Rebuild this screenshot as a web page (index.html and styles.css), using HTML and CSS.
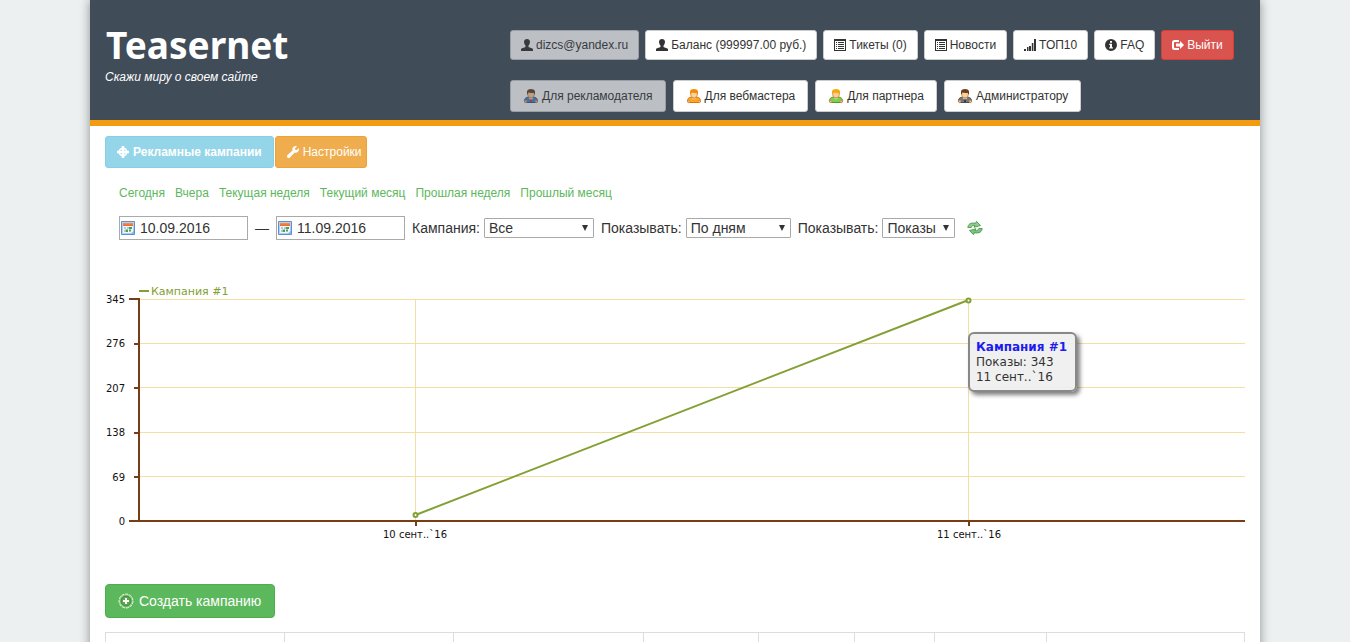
FILE: index.html
```html
<!DOCTYPE html>
<html lang="ru">
<head>
  <meta charset="UTF-8" />
  <title>Teasernet</title>
  <meta name="viewport" content="width=device-width, initial-scale=1" />
  <link rel="stylesheet" href="styles.css">
</head>
<body>

  <!-- Иконки -->
  <svg class="sprite" aria-hidden="true">
    <symbol id="i-user" viewBox="0 0 12 12">
      <path d="M6 0C4.200 0 3 1.200 3 2.800c0 1.500.7 3 1.500 3.900v1.300C3.300 8.800 0 8.900 0 10.500V12h12v-1.500c0-1.600-3.300-1.700-4.500-2.500V6.700C8.300 5.800 9 4.300 9 2.800 9 1.200 7.800 0 6 0z"/>
    </symbol>
    <symbol id="i-list" viewBox="0 0 12 12">
      <path fill-rule="evenodd" d="M0 0h12v12H0zM1 2v9h10V2z"/>
      <path d="M2 3h1v1H2zM4 3h6v1H4zM2 5h1v1H2zM4 5h6v1H4zM2 7h1v1H2zM4 7h6v1H4zM2 9h1v1H2zM4 9h6v1H4z"/>
    </symbol>
    <symbol id="i-signal" viewBox="0 0 12 12">
      <path d="M0 10h2v2H0zM3 8h1.500v4H3zM5 7h2v5H5zM7.800 4h1.600v8H7.800zM10 0h2v12h-2z"/>
    </symbol>
    <symbol id="i-info" viewBox="0 0 12 12">
      <path fill-rule="evenodd" d="M6 0a6 6 0 1 0 0 12A6 6 0 0 0 6 0zM5 2h2v1.800H5zM4.200 4.800H7V8.300h.9v1.200H4.200V8.300H5V6h-.8z"/>
    </symbol>
    <symbol id="i-logout" viewBox="0 0 12 12">
      <path d="M7 1H2.500A2.500 2.500 0 0 0 0 3.500v5A2.500 2.500 0 0 0 2.500 11H7V9H3a1 1 0 0 1-1-1V4a1 1 0 0 1 1-1h4z"/>
      <path d="M8 2l4 4-4 4V7.500H4v-3h4z"/>
    </symbol>
    <symbol id="i-target" viewBox="0 0 12 12">
      <path fill-rule="evenodd" d="M4.700 0h2.600v1.500A4.800 4.800 0 0 1 10.500 4.700H12v2.600h-1.500A4.800 4.800 0 0 1 7.300 10.500V12H4.700v-1.500A4.800 4.800 0 0 1 1.500 7.300H0V4.700h1.500A4.800 4.800 0 0 1 4.700 1.500zM4.700 3.300A3 3 0 0 0 3.300 4.700H4.700zM7.300 3.300V4.700h1.400A3 3 0 0 0 7.300 3.300zM3.300 7.300A3 3 0 0 0 4.700 8.700V7.300zM7.300 7.300v1.400A3 3 0 0 0 8.700 7.300z"/>
    </symbol>
    <symbol id="i-wrench" viewBox="0 0 12 12">
      <path d="M10 .3L8 2.200l.3 1.500 1.500.3L11.800 2c.5 1.700 0 3.400-1.200 4.100-.9.600-2 .7-2.900.3L3 11.500a1.700 1.700 0 0 1-2.500-2.400L5.500 4.500C5.100 3.300 5.400 1.900 6.300 1 7.300 0 8.800-.2 10 .3z"/>
    </symbol>
    <symbol id="i-person" viewBox="0 0 16 16">
      <path d="M2.500 14.500C1.300 14 1.200 12.800 1.700 11.500 2.300 10 3.300 9.500 4.800 9.300h6.400c1.500.2 2.500.7 3.100 2.200.5 1.300.4 2.500-.8 3z" fill="var(--coat)" stroke="var(--edge)"/>
      <path d="M5.500 9.500h5L8 12.500z" fill="var(--shirt)"/>
      <path d="M7.500 10.500h1l.5 3.500H7z" fill="var(--tie)"/>
      <circle cx="2.700" cy="13.500" r="1.200" fill="#f4c08a" stroke="#c87a3a" stroke-width=".6"/>
      <circle cx="13.300" cy="13.500" r="1.200" fill="#f4c08a" stroke="#c87a3a" stroke-width=".6"/>
      <rect x="4.800" y="2.500" width="6.400" height="7.200" rx="2.600" fill="#fad09c" stroke="#c98545" stroke-width=".8"/>
      <path d="M4 6.300V3.300C4.500 1.800 6 1.100 8 1.100s3.500.7 4 2.200v3h-1V4.800c-2 .3-4 .3-6-.2v1.700z" fill="var(--hair)"/>
    </symbol>
    <symbol id="i-calendar" viewBox="0 0 14 14">
      <path d="M.5.500h13v13H.5z" fill="#eef5fd" stroke="#5b8fd0"/>
      <path d="M1.500 1.500h11v11h-11z" fill="none" stroke="#b4d0f0"/>
      <path d="M2 2h10v3H2z" fill="#f58a4b"/>
      <path d="M2 3.500h10V5H2z" fill="#ee6f2d"/>
      <path d="M3 6h2v2H3zM6 6h2v2H6zM3 9h1v2H3z" fill="#b6c6dc"/>
      <path d="M8 6h3v2H8zM4.500 8.500h2.500v2.500H4.500zM8 8.500h2v2H8z" fill="#4f9f54"/>
      <path d="M13 9.500L9.500 13H13z" fill="#8fb7e6"/>
    </symbol>
    <symbol id="i-refresh" viewBox="0 0 16 16">
      <path d="M.8 7.500C1 4.300 3.800 2.200 8.500 3.300L9.500 1.300 13.500 5.500 7 7.300 7.900 5.500C6 5.100 4.800 5.800 4.200 7.500z" fill="#8cd08a" stroke="#3f8f45" stroke-width=".8"/>
      <path d="M15.200 8.500c-.2 3.200-3 5.300-7.700 4.200l-1 2L2.500 10.500 9 8.700l-.9 1.800c1.900.4 3.100-.3 3.700-2z" fill="#7cc67c" stroke="#3f8f45" stroke-width=".8"/>
    </symbol>
    <symbol id="i-add" viewBox="0 0 16 16">
      <circle cx="8" cy="8" r="7" fill="#8fcf85" stroke="#e5f5e0" stroke-dasharray="3 1"/>
      <circle cx="8" cy="8" r="5" fill="#57a84f" stroke="#3f8a3a"/>
      <path d="M7 5h2v2h2v2H9v2H7V9H5V7h2z" fill="#fff"/>
    </symbol>
  </svg>

  <div class="page">
    <header class="header">
      <div class="brand">
        <h1>Teasernet</h1>
        <p>Скажи миру о своем сайте</p>
      </div>
      <div class="menus">
        <nav class="menu menu-top" aria-label="Аккаунт">
          <a class="btn disabled" href="#"><svg class="glyph"><use href="#i-user"/></svg>dizcs@yandex.ru</a>
          <a class="btn" href="#"><svg class="glyph"><use href="#i-user"/></svg>Баланс (999997.00 руб.)</a>
          <a class="btn" href="#"><svg class="glyph"><use href="#i-list"/></svg>Тикеты (0)</a>
          <a class="btn" href="#"><svg class="glyph"><use href="#i-list"/></svg>Новости</a>
          <a class="btn" href="#"><svg class="glyph"><use href="#i-signal"/></svg>ТОП10</a>
          <a class="btn" href="#"><svg class="glyph"><use href="#i-info"/></svg>FAQ</a>
          <a class="btn btn-danger" href="#"><svg class="glyph"><use href="#i-logout"/></svg>Выйти</a>
        </nav>
        <nav class="menu menu-roles" aria-label="Разделы">
          <a class="btn btn-role disabled" href="#"><svg class="person advertiser"><use href="#i-person"/></svg>Для рекламодателя</a>
          <a class="btn btn-role" href="#"><svg class="person webmaster"><use href="#i-person"/></svg>Для вебмастера</a>
          <a class="btn btn-role" href="#"><svg class="person partner"><use href="#i-person"/></svg>Для партнера</a>
          <a class="btn btn-role" href="#"><svg class="person admin"><use href="#i-person"/></svg>Администратору</a>
        </nav>
      </div>
    </header>

    <main class="content">
      <nav class="tabs" aria-label="Кабинет">
        <a class="btn tab tab-campaigns" href="#"><svg class="glyph"><use href="#i-target"/></svg>Рекламные кампании</a>
        <a class="btn tab tab-settings" href="#"><svg class="glyph"><use href="#i-wrench"/></svg>Настройки</a>
      </nav>

      <div class="periods">
        <a href="#">Сегодня</a>
        <a href="#">Вчера</a>
        <a href="#">Текущая неделя</a>
        <a href="#">Текущий месяц</a>
        <a href="#">Прошлая неделя</a>
        <a href="#">Прошлый месяц</a>
      </div>

      <form class="filters">
        <span class="date">
          <svg><use href="#i-calendar"/></svg>
          <input type="text" name="from" value="10.09.2016" aria-label="Дата начала">
        </span>
        <span>—</span>
        <span class="date">
          <svg><use href="#i-calendar"/></svg>
          <input type="text" name="to" value="11.09.2016" aria-label="Дата окончания">
        </span>
        <div class="field">
          <label for="campaign">Кампания:</label>
          <span class="select campaign"><select id="campaign"><option>Все</option></select></span>
        </div>
        <div class="field">
          <label for="group">Показывать:</label>
          <span class="select group"><select id="group"><option>По дням</option></select></span>
        </div>
        <div class="field">
          <label for="metric">Показывать:</label>
          <span class="select metric"><select id="metric"><option>Показы</option></select></span>
        </div>
        <button type="submit" class="refresh" aria-label="Обновить"><svg><use href="#i-refresh"/></svg></button>
      </form>

      <div class="chart">
        <svg class="plot" viewBox="0 0 1140 270" role="img" aria-label="Показы по дням">
          <path class="grid" d="M35 19.500H1140M35 63.500H1140M35 107.500H1140M35 152.500H1140M35 196.500H1140M310.500 19V240M863.500 19V240"/>
          <path class="axis" d="M24 19H34M29 64H34M29 108H34M29 153H34M29 197H34M34 18V241M24 241H1140M311 241V246M864 241V246"/>
          <g class="labels-y">
            <text x="20" y="23">345</text>
            <text x="20" y="67">276</text>
            <text x="20" y="112">207</text>
            <text x="20" y="156">138</text>
            <text x="20" y="201">69</text>
            <text x="20" y="245">0</text>
          </g>
          <g class="labels-x">
            <text x="310" y="258">10 сент..`16</text>
            <text x="864" y="258">11 сент..`16</text>
          </g>
          <path class="line" d="M34 11H44M310.500 235L863.500 20"/>
          <circle class="dot" cx="310.500" cy="235" r="2"/>
          <circle class="dot" cx="863.500" cy="20.500" r="2"/>
          <text class="legend" x="46" y="15">Кампания #1</text>
        </svg>
        <div class="tooltip">
          <b>Кампания #1</b>
          <span>Показы: 343</span>
          <span>11 сент..`16</span>
        </div>
      </div>

      <button type="button" class="create"><svg><use href="#i-add"/></svg>Создать кампанию</button>

      <table class="campaigns">
        <colgroup>
          <col class="c1"><col class="c2"><col class="c3"><col class="c4">
          <col class="c5"><col class="c6"><col class="c7"><col>
        </colgroup>
        <tr><th></th><th></th><th></th><th></th><th></th><th></th><th></th><th></th></tr>
      </table>
    </main>
  </div>

</body>
</html>
```
FILE: styles.css
```css
* {
  box-sizing: border-box;
}

body {
  margin: 0;
  background: #ecf0f1;
  color: #333;
  font-family: "Liberation Sans", Arial, sans-serif;
  font-size: 14px;
  line-height: 20px;
}

a {
  text-decoration: none;
}

.sprite {
  position: absolute;
  width: 0;
  height: 0;
}

.page {
  max-width: 1170px;
  min-height: 100vh;
  margin: 0 auto;
  background: #fff;
  box-shadow: 0 0 10px rgba(0, 0, 0, 0.4);
}

/* Header */
.header {
  display: grid;
  grid-template-columns: 405px 1fr;
  padding: 30px 15px 8px;
  background: #414c59;
  border-bottom: 6px solid #f39c12;
  color: #fff;
}

.brand h1 {
  margin: 0;
  padding-left: 1px;
  font-family: "Noto Sans", Tahoma, sans-serif;
  font-size: 37px;
  line-height: 30px;
}

.brand p {
  margin: 8px 0 0;
  font-size: 12px;
  font-style: italic;
  line-height: 18px;
}

.menus {
  display: flex;
  flex-direction: column;
  gap: 20px;
}

.menu {
  display: flex;
  flex-wrap: wrap;
  gap: 6px;
}

.menu-roles {
  gap: 7px;
}

.btn {
  display: inline-flex;
  align-items: center;
  gap: 3px;
  padding: 5px 10px;
  border: 1px solid #ccc;
  border-radius: 3px;
  background: #fff;
  color: #333;
  font-size: 12px;
  line-height: 18px;
  white-space: nowrap;
}

.btn-role {
  padding: 6px 12px;
}

.btn-danger {
  background: #d9534f;
  border-color: #d43f3a;
  color: #fff;
}

.disabled {
  opacity: 0.65;
}

.glyph {
  width: 12px;
  height: 12px;
  fill: currentColor;
}

.person {
  width: 16px;
  height: 16px;
}

.advertiser {
  --coat: #4c86c6;
  --edge: #2d5c94;
  --shirt: #fff;
  --tie: #d33;
  --hair: #6b4428;
}
.webmaster {
  --coat: #ffa425;
  --edge: #d97706;
  --shirt: #ffc56b;
  --tie: #ffa425;
  --hair: #f58a07;
}
.partner {
  --coat: #84cc4c;
  --edge: #4c9a2a;
  --shirt: #b5e68a;
  --tie: #84cc4c;
  --hair: #f5a80f;
}
.admin {
  --coat: #777;
  --edge: #505050;
  --shirt: #eee;
  --tie: #333;
  --hair: #6b3d1c;
}

/* Content */
.content {
  padding: 10px 15px 0;
}

.tabs {
  display: flex;
  gap: 1px;
}

.tab {
  gap: 4px;
  padding: 6px 11px;
  color: #fff;
}

.tab-campaigns {
  background: #5bc0de;
  border-color: #46b8da;
  font-weight: bold;
  opacity: 0.65;
}

.tab-settings {
  padding-right: 4px;
  background: #f0ad4e;
  border-color: #eea236;
}

.periods {
  display: flex;
  flex-wrap: wrap;
  gap: 10px;
  margin: 16px 14px 0;
  font-size: 12px;
  line-height: 18px;
}

.periods a {
  color: #5cb85c;
}

.filters {
  display: flex;
  flex-wrap: wrap;
  align-items: center;
  gap: 7px;
  margin: 14px 14px 0;
}

.date {
  position: relative;
}

.date svg {
  position: absolute;
  left: 2px;
  top: 5px;
  width: 14px;
  height: 14px;
}

.date input {
  display: block;
  width: 129px;
  height: 24px;
  padding: 0 0 0 20px;
  border: 1px solid #aaa;
  background: transparent;
  color: #333;
  font: inherit;
}

.field {
  display: flex;
  align-items: center;
  gap: 4px;
}

.select {
  position: relative;
}

.select::after {
  content: "";
  position: absolute;
  right: 6px;
  top: 7px;
  border: 3px solid transparent;
  border-top: 6px solid #333;
  border-bottom: 0;
  pointer-events: none;
}

.select select {
  display: block;
  width: 100%;
  height: 20px;
  padding: 0 4px;
  border: 1px solid #a9a9a9;
  border-radius: 1px;
  background: #fff;
  color: #333;
  font: inherit;
  line-height: 18px;
  appearance: none;
}

.campaign {
  width: 110px;
}
.group {
  width: 105px;
}
.metric {
  width: 73px;
}

.refresh {
  margin-left: 5px;
  padding: 0;
  border: 0;
  background: none;
  cursor: pointer;
}

.refresh svg {
  display: block;
  width: 16px;
  height: 16px;
}

/* Chart */
.chart {
  position: relative;
  margin-top: 40px;
  font-family: "DejaVu Sans", Verdana, sans-serif;
}

.plot {
  display: block;
  width: 100%;
}

.grid {
  fill: none;
  stroke: #f3e0a0;
}

.axis {
  fill: none;
  stroke: #783d14;
  stroke-width: 2;
}

.line {
  fill: none;
  stroke: #83a035;
  stroke-width: 2;
}

.dot {
  fill: #fff;
  stroke: #83a035;
  stroke-width: 2;
}

.labels-x,
.labels-y {
  font-size: 10px;
  fill: #111;
}

.labels-y {
  text-anchor: end;
}

.labels-x {
  text-anchor: middle;
}

.legend {
  font-size: 11px;
  fill: #83a035;
}

.tooltip {
  position: absolute;
  left: 75.7%;
  top: 52px;
  display: flex;
  flex-direction: column;
  padding: 6px 8px 5px 6px;
  border: 2px solid #888;
  border-radius: 6px;
  background: rgba(238, 238, 238, 0.9);
  box-shadow: 3px 3px 4px rgba(0, 0, 0, 0.5);
  font-size: 12px;
  line-height: 15px;
}

.tooltip b {
  color: #1c1cee;
}

.create {
  display: flex;
  align-items: center;
  gap: 5px;
  margin-top: 34px;
  padding: 6px 13px 6px 12px;
  border: 1px solid #4cae4c;
  border-radius: 4px;
  background: #5cb85c;
  color: #fff;
  font: inherit;
  cursor: pointer;
}

.create svg {
  width: 16px;
  height: 16px;
}

.campaigns {
  width: 100%;
  margin-top: 14px;
  border-collapse: collapse;
  table-layout: fixed;
}

.campaigns th {
  height: 36px;
  border: 1px solid #ddd;
}

.c1 {
  width: 179px;
}
.c2 {
  width: 169px;
}
.c3 {
  width: 190px;
}
.c4 {
  width: 115px;
}
.c5 {
  width: 96px;
}
.c6 {
  width: 80px;
}
.c7 {
  width: 112px;
}
```
